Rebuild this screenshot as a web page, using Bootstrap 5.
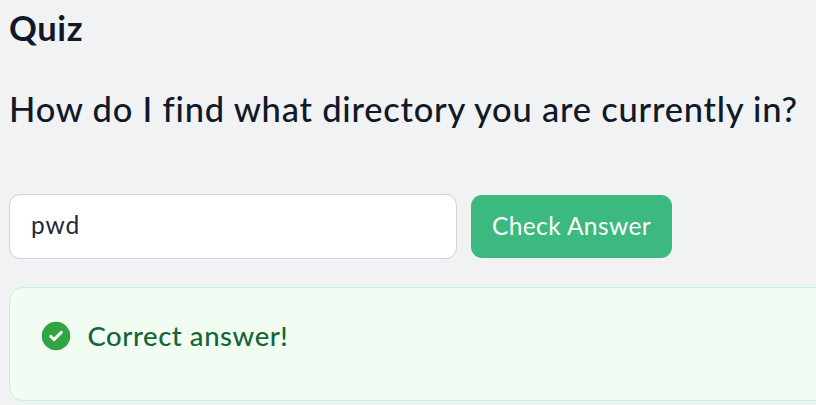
<!DOCTYPE html>
<html lang="en">
<head>
<meta charset="utf-8">
<meta name="viewport" content="width=device-width, initial-scale=1">
<title>Quiz</title>
<link href="https://cdn.jsdelivr.net/npm/bootstrap@5.3.0/dist/css/bootstrap.min.css" rel="stylesheet">
<style>
body{background:#f0f2f4;color:#111827;font-family:Lato,"Open Sans",sans-serif;overflow:hidden}
.quiz{padding:6px 0 0 9px}
.quiz-title{font-size:34.5px;font-weight:700;line-height:44px;letter-spacing:.6px;margin-bottom:37px}
.quiz-question{font-size:34.5px;font-weight:500;line-height:44px;letter-spacing:.76px;margin-bottom:63px}
.answer-row{gap:14px}
.answer-input{width:448px;height:65px;border:1px solid #d1d5db;border-radius:11px;padding:0 21px 4px;font-size:24.5px;letter-spacing:.9px;color:#1f2937}
.check-btn,.check-btn:hover{width:201px;height:63px;border:0;border-radius:11px;background:#3cb97f;color:#fff;font-size:24.5px;letter-spacing:.4px;padding:0 0 1px}
.result{width:840px;height:114px;margin:28px 0 0;padding:31px 31px 0;border:1px solid #bbf7d0;border-radius:14px;background:#f1fcf3;color:#166534;gap:17px}
.result-icon{width:30px;height:30px;margin:2.3px 0 0 -.5px}
.result-text{font-size:27.5px;line-height:33px;letter-spacing:.55px;font-weight:500}
</style>
</head>
<body>
<main class="quiz">
  <h1 class="quiz-title"><span>Quiz</span></h1>
  <h2 class="quiz-question text-nowrap"><span>How do I find what directory you are currently in?</span></h2>
  <form class="answer-row d-flex align-items-center" onsubmit="return false">
    <input class="form-control answer-input shadow-none" type="text" value="pwd" aria-label="Answer">
    <button class="btn check-btn" type="button">Check Answer</button>
  </form>
  <div class="alert result d-flex align-items-start" role="alert">
    <svg class="result-icon flex-shrink-0" viewBox="0 0 30 30" aria-hidden="true"><circle cx="15" cy="15" r="14.3" fill="#31a444"/><path d="M9.7 15.3 13 18.6 20.3 11.4" fill="none" stroke="#f1fcf3" stroke-width="3" stroke-linecap="round" stroke-linejoin="round"/></svg>
    <span class="result-text">Correct answer!</span>
  </div>
</main>
<script src="https://cdn.jsdelivr.net/npm/bootstrap@5.3.0/dist/js/bootstrap.bundle.min.js"></script>
</body>
</html>
